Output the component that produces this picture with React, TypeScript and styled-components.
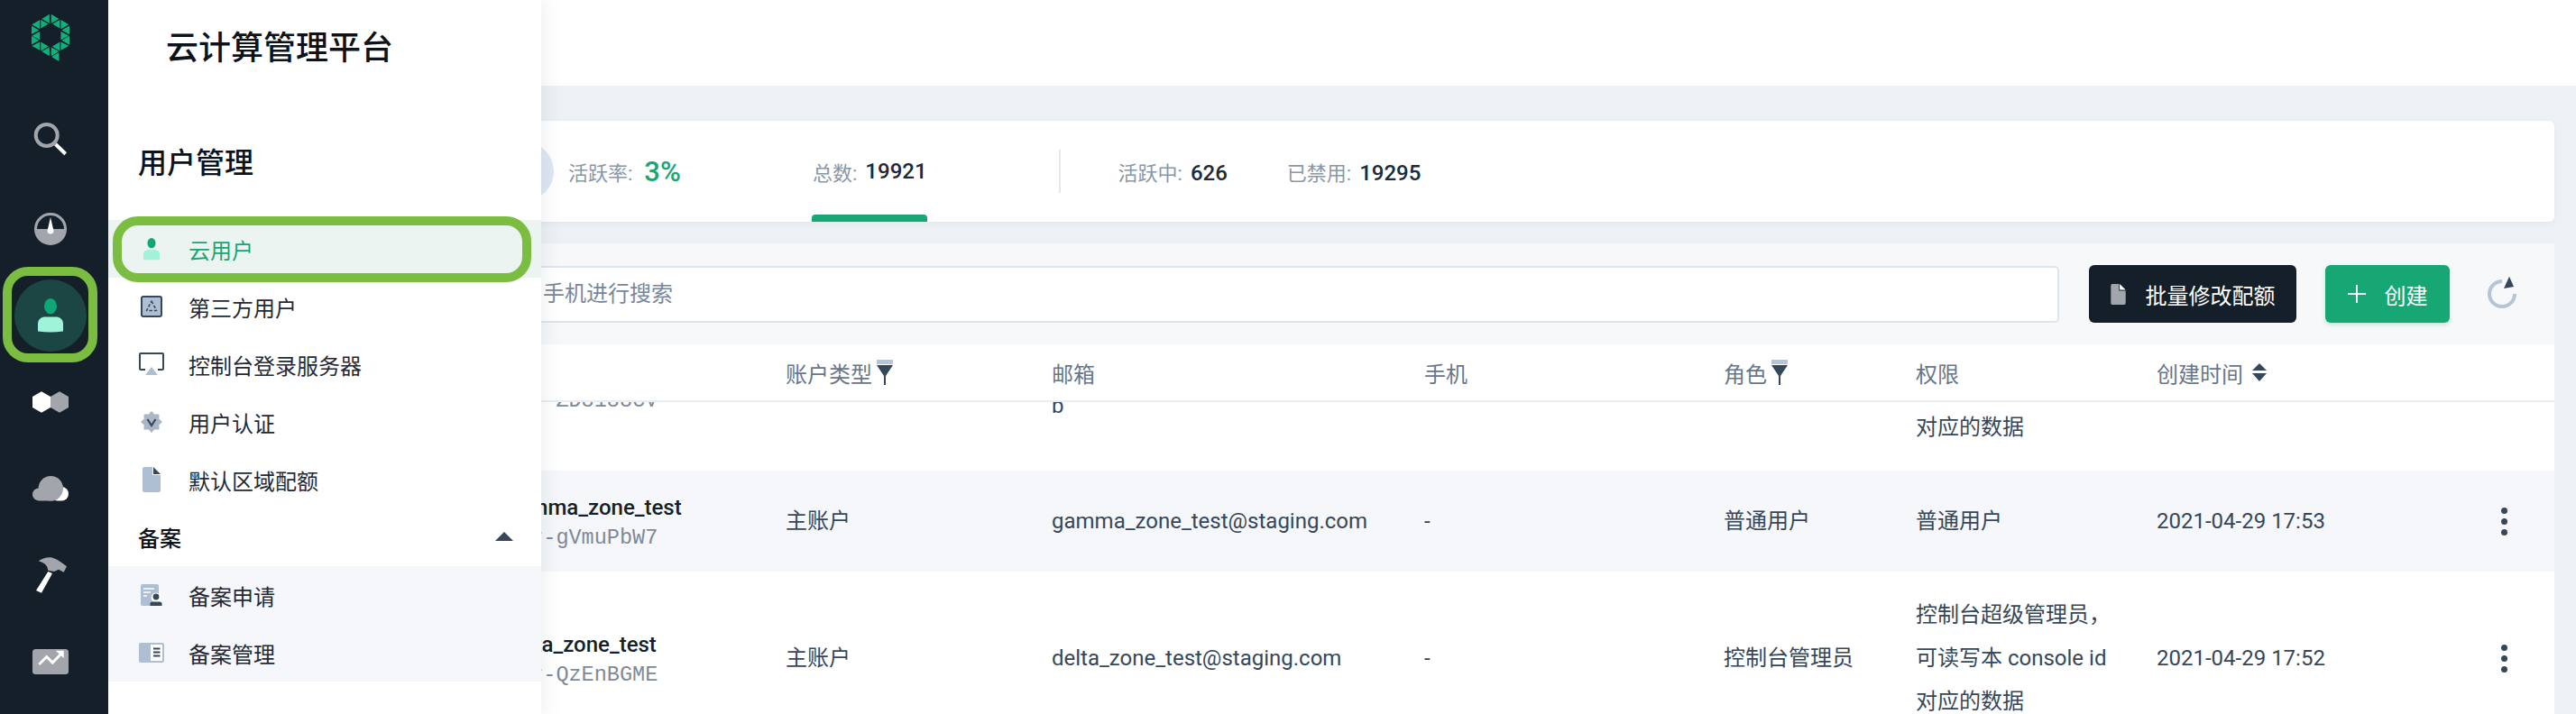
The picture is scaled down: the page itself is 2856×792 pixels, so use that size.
import React from "react";
import styled, { createGlobalStyle } from "styled-components";

const GlobalStyle = createGlobalStyle`
  html, body {
    margin: 0;
    padding: 0;
    background: #edf1f5;
  }
  body {
    font-family: Roboto, "Noto Sans CJK SC", sans-serif;
    overflow: hidden;
  }
`;

const Page = styled.div`
  position: relative;
  display: flex;
  width: 2856px;
  height: 792px;
  overflow: hidden;
  background: #edf1f5;
`;

const Sidebar = styled.nav`
  flex: 0 0 120px;
  z-index: 3;
  padding-top: 15px;
  background: #151f29;
  box-sizing: border-box;
`;

const LogoWrap = styled.div`
  display: flex;
  justify-content: center;
  margin-bottom: 42px;
  padding-right: 8px;
`;

const NavRow = styled.div<{ $selected?: boolean }>`
  position: relative;
  display: flex;
  align-items: center;
  justify-content: center;
  width: 112px;
  height: 96px;
  ${(p) =>
    p.$selected &&
    `
    &::after {
      content: "";
      position: absolute;
      top: -6px;
      bottom: -4px;
      left: 3px;
      right: 4px;
      border: 10px solid #7abd41;
      border-radius: 28px;
    }
  `}
`;

const NavCircle = styled.div`
  display: flex;
  align-items: center;
  justify-content: center;
  width: 80px;
  height: 80px;
  border-radius: 50%;
  background: #1c4644;
`;

const Panel = styled.aside`
  position: absolute;
  top: 0;
  bottom: 0;
  left: 120px;
  z-index: 2;
  width: 480px;
  background: #fff;
  box-shadow: 0 0 24px rgba(30, 50, 70, 0.1);
`;

const PanelTitle = styled.div`
  height: 106px;
  padding: 2px 0 0 64px;
  font-size: 36px;
  font-weight: 500;
  line-height: 104px;
  color: #0d1319;
  box-sizing: border-box;
`;

const SectionTitle = styled.div`
  height: 138px;
  padding: 34px 0 0 33px;
  font-size: 32px;
  font-weight: 500;
  line-height: 82px;
  color: #0d1319;
  box-sizing: border-box;
`;

const MenuRow = styled.div<{ $active?: boolean }>`
  position: relative;
  display: flex;
  align-items: center;
  height: 64px;
  padding-left: 33px;
  font-size: 24px;
  color: ${(p) => (p.$active ? "#16a774" : "#1f2a36")};
  background: ${(p) => (p.$active ? "#ebf4f1" : "transparent")};
  ${(p) =>
    p.$active &&
    `
    &::after {
      content: "";
      position: absolute;
      top: -4px;
      bottom: -5px;
      left: 5px;
      right: 11px;
      border: 10px solid #7abd41;
      border-radius: 28px;
    }
  `}
`;

const MenuIcon = styled.span`
  display: flex;
  align-items: center;
  justify-content: center;
  flex: 0 0 30px;
  margin-right: 26px;
`;

const GroupHeader = styled.div`
  display: flex;
  align-items: center;
  justify-content: space-between;
  height: 56px;
  padding: 0 31px 0 33px;
  margin-top: 3px;
  font-size: 24px;
  font-weight: 500;
  color: #0d1319;
`;

const Caret = styled.span`
  width: 0;
  height: 0;
  border-left: 10px solid transparent;
  border-right: 10px solid transparent;
  border-bottom: 10px solid #36475a;
`;

const SubMenu = styled.div`
  margin-top: 5px;
  background: #f5f7fb;
`;

const Main = styled.main`
  flex: 1;
  min-width: 0;
`;

const TopBar = styled.header`
  height: 95px;
  background: #fff;
`;

const Content = styled.div`
  padding: 39px 24px 0;
`;

const StatsCard = styled.section`
  display: flex;
  align-items: center;
  height: 112px;
  padding-left: 404px;
  margin-bottom: 24px;
  border-radius: 6px;
  background: #fff;
  box-shadow: 0 2px 6px rgba(30, 50, 70, 0.05);
  font-size: 22px;
  color: #8a97a5;
`;

const RateCircle = styled.div`
  flex: 0 0 66px;
  height: 66px;
  margin-right: 16px;
  border-radius: 50%;
  background: #dfe8f3;
`;

const RateBlock = styled.div`
  display: flex;
  align-items: center;
  flex: 0 0 271px;
`;

const RateValue = styled.span`
  margin-left: 13px;
  font-size: 31px;
  font-weight: 500;
  color: #16a774;
`;

const Stat = styled.div<{ $gap?: number }>`
  margin-right: ${(p) => p.$gap ?? 0}px;
  white-space: nowrap;
`;

const StatNumber = styled.b`
  margin-left: 9px;
  font-size: 24px;
  font-weight: 500;
  color: #1e2a36;
`;

const ActiveTab = styled.div`
  position: relative;
  display: flex;
  align-items: center;
  align-self: stretch;
  flex: 0 0 126px;
  margin-right: 146px;
  white-space: nowrap;
  &::after {
    content: "";
    position: absolute;
    left: -1px;
    right: 0;
    bottom: 0;
    height: 8px;
    border-radius: 4px 4px 0 0;
    background: #16a774;
  }
`;

const Divider = styled.div`
  flex: 0 0 2px;
  height: 48px;
  margin-right: 64px;
  background: #e2e8ee;
`;

const Toolbar = styled.div`
  display: flex;
  align-items: center;
  height: 112px;
  padding-left: 196px;
  background: #f6f8fa;
`;

const SearchBox = styled.div`
  flex: 0 0 1943px;
  height: 63px;
  padding-left: 20px;
  margin-right: 33px;
  border: 2px solid #dde5ee;
  border-radius: 5px;
  background: #fff;
  box-sizing: border-box;
  font-size: 24px;
  line-height: 59px;
  color: #78879a;
  white-space: nowrap;
`;

const ActionButton = styled.button<{ $primary?: boolean }>`
  display: flex;
  align-items: center;
  justify-content: center;
  flex: 0 0 ${(p) => (p.$primary ? "138px" : "230px")};
  height: 64px;
  padding: 0;
  margin-right: 32px;
  border: 0;
  border-radius: 6px;
  font-family: inherit;
  font-size: 24px;
  color: #fff;
  background: ${(p) => (p.$primary ? "#16a774" : "#151f29")};
  box-shadow: ${(p) => (p.$primary ? "0 2px 4px rgba(22, 167, 116, 0.25)" : "none")};
  gap: ${(p) => (p.$primary ? "21px" : "22px")};
`;

const RefreshWrap = styled.span`
  display: flex;
  margin: -4px 0 0 9px;
`;

const Table = styled.section`
  background: #fff;
`;

const columns = "311px 295px 413px 332px 213px 267px 267px 1fr";

const HeaderRow = styled.div`
  display: grid;
  grid-template-columns: ${columns};
  align-items: center;
  height: 64px;
  padding-left: 416px;
  border-bottom: 2px solid #e8edf2;
  box-sizing: border-box;
  font-size: 24px;
  color: #67768a;
`;

const HeadCell = styled.div<{ $gap?: number }>`
  display: flex;
  align-items: center;
  gap: ${(p) => p.$gap ?? 4}px;
  height: 62px;
`;

const Viewport = styled.div`
  height: 346px;
  overflow: hidden;
`;

const Rows = styled.div`
  margin-top: -116px;
`;

const Row = styled.div<{ $tall?: boolean; $shade?: boolean }>`
  display: grid;
  grid-template-columns: ${columns};
  align-items: center;
  height: ${(p) => (p.$tall ? "192px" : "112px")};
  padding-left: 416px;
  background: ${(p) => (p.$shade ? "#f5f7fa" : "#fff")};
  font-size: 24px;
  line-height: 48px;
  color: #36475a;
`;

const NameCell = styled.div`
  margin-top: 4px;
`;

const Name = styled.div`
  font-weight: 500;
  line-height: 34px;
  color: #151f29;
  white-space: nowrap;
`;

const SubId = styled.div`
  font-family: "Liberation Mono", monospace;
  font-size: 23.5px;
  line-height: 34px;
  color: #7c8a99;
  white-space: nowrap;
`;

const Line = styled.div`
  white-space: nowrap;
`;

const Kebab = styled.div`
  display: flex;
  flex-direction: column;
  align-items: center;
  gap: 5px;
  width: 8px;
  margin-left: 114px;
`;

const Dot = styled.span`
  width: 7px;
  height: 7px;
  border-radius: 50%;
  background: #36475a;
`;

const triangles = [
  "3,2 29,18 3,32",
  "32,21 32,50 7,35",
  "35,21 62,37 35,52",
  "64,41 64,70 38,56",
  "35,60 62,75 35,88",
  "64,75 64,105 38,90",
  "35,95 62,109 35,123",
  "32,95 32,125 6,110",
  "3,113 29,127 3,143",
];

const Logo = () => (
  <svg width="42" height="53" viewBox="105 45 127 160" aria-hidden="true">
    <g fill="#10b07c">
      {triangles.map((t) => {
        const pts = t.split(" ").map((p) => p.split(",").map(Number));
        return (
          <React.Fragment key={t}>
            <polygon points={pts.map(([x, y]) => `${168 + x},${45 + y}`).join(" ")} />
            <polygon points={pts.map(([x, y]) => `${168 - x},${45 + y}`).join(" ")} />
          </React.Fragment>
        );
      })}
      <polygon points="172,190 197,176 197,205" />
    </g>
  </svg>
);

const GREY = "#a2a5ab";
const LIGHT = "#aebfd3";
const DARK = "#36475a";

const NavSearch = () => (
  <svg width="48" height="48" viewBox="0 0 48 48" aria-hidden="true">
    <circle cx="19.7" cy="16" r="12" fill="none" stroke={GREY} strokeWidth="4" />
    <path d="M29.6 26 L40.7 36.7" stroke="#fff" strokeWidth="4" />
  </svg>
);

const NavGauge = () => (
  <svg width="48" height="48" viewBox="0 0 48 48" aria-hidden="true">
    <path d="M6 24 a18 18 0 0 0 36 0 z" fill={GREY} />
    <path d="M7.5 24 a16.5 16.5 0 0 1 33 0" fill="none" stroke={GREY} strokeWidth="3" />
    <path d="M24 11 L27.5 26 a3.5 3.5 0 1 1 -7 0 z" fill="#fff" />
  </svg>
);

const UserGlyph = ({ width, height, viewBox }: { width: number; height: number; viewBox: string }) => (
  <svg width={width} height={height} viewBox={viewBox} aria-hidden="true">
    <ellipse cx="24" cy="13.7" rx="7" ry="8.7" fill="#0fa678" />
    <path
      d="M10 41.5 V33 C10 28 14 25.5 18 25.5 H30 C34 25.5 38 28 38 33 V41.5 Q24 43.5 10 41.5 Z"
      fill="#9ef3d8"
    />
  </svg>
);

const NavHexes = () => (
  <svg width="48" height="48" viewBox="0 0 48 48" aria-hidden="true">
    <polygon points="34,12.3 44,18 44,30 34,35.7 24,30 24,18" fill={GREY} />
    <polygon points="14,12.3 24,18 24,30 14,35.7 4,30 4,18" fill="#fff" />
  </svg>
);

const NavCloud = () => (
  <svg width="48" height="48" viewBox="0 0 48 48" aria-hidden="true">
    <rect x="24" y="22" width="20" height="15.4" rx="7.7" fill="#fff" />
    <rect x="4" y="23.4" width="30" height="14" rx="7" fill={GREY} />
    <circle cx="24.3" cy="23.8" r="13.7" fill={GREY} />
  </svg>
);

const NavHammer = () => (
  <svg width="48" height="48" viewBox="0 0 48 48" aria-hidden="true">
    <path d="M21.3 20 L26 22 L14 43.7 L8 41 Z" fill="#fff" />
    <path
      d="M10.7 8.3 Q18 3.5 24.7 4.3 Q30 5 42 14.3 L38.7 20.7 L33 17.7 L28 20 L21.3 18.7 Q21 11 10.7 8.3 Z"
      fill={GREY}
    />
  </svg>
);

const NavChart = () => (
  <svg width="48" height="48" viewBox="0 0 48 48" aria-hidden="true">
    <rect x="4" y="10" width="40" height="28" rx="3.5" fill={GREY} />
    <path d="M11.3 27 L19.7 18.5 L26.3 25 L36 15" fill="none" stroke="#fff" strokeWidth="3" />
    <polygon points="29.7,11.7 38.7,11.7 38.7,20" fill="#fff" />
  </svg>
);

const IconThirdParty = () => (
  <svg width="24" height="24" viewBox="0 0 24 24" aria-hidden="true">
    <rect x="1" y="1" width="22" height="22" rx="2" fill={LIGHT} stroke={DARK} strokeWidth="2" />
    <path
      d="M12 6 L17.5 16.5 H6.5 Z"
      fill="none"
      stroke={DARK}
      strokeWidth="1.6"
      strokeDasharray="3.5 2"
      strokeLinejoin="round"
    />
  </svg>
);

const IconMonitor = () => (
  <svg width="28" height="28" viewBox="0 0 28 28" aria-hidden="true">
    <path
      d="M7 20 H2 a1 1 0 0 1 -1 -1 V3 a1 1 0 0 1 1 -1 H26 a1 1 0 0 1 1 1 V19 a1 1 0 0 1 -1 1 H21"
      fill="none"
      stroke={DARK}
      strokeWidth="2"
    />
    <polygon points="14,17 21,26 7,26" fill={LIGHT} />
  </svg>
);

const IconBadge = () => (
  <svg width="24" height="24" viewBox="0 0 24 24" aria-hidden="true">
    <polygon
      points="12,0 15.2,3.6 20.5,3.5 20.4,8.8 24,12 20.4,15.2 20.5,20.5 15.2,20.4 12,24 8.8,20.4 3.5,20.5 3.6,15.2 0,12 3.6,8.8 3.5,3.5 8.8,3.6"
      fill="#aab6c4"
    />
    <path d="M7.5 9 L12 16 L16.5 9" fill="none" stroke={DARK} strokeWidth="2.2" />
  </svg>
);

const IconFile = ({
  fill = LIGHT,
  fold = DARK,
  width = 20,
  height = 28,
}: {
  fill?: string;
  fold?: string;
  width?: number;
  height?: number;
}) => (
  <svg width={width} height={height} viewBox="0 0 20 28" aria-hidden="true">
    <path d="M2 0 H11 V9 H20 V26 a2 2 0 0 1 -2 2 H2 a2 2 0 0 1 -2 -2 V2 a2 2 0 0 1 2 -2 Z" fill={fill} />
    <polygon points="12,0 20,8 12,8" fill={fold} />
  </svg>
);

const IconRecordApply = () => (
  <svg width="24" height="24" viewBox="0 0 24 24" aria-hidden="true">
    <rect x="0" y="0" width="20" height="24" rx="2" fill={LIGHT} />
    <path d="M3 5 H15 M3 9 H11 M3 13 H7" stroke="#fff" strokeWidth="1.6" />
    <circle cx="17" cy="15" r="5.5" fill="#fff" />
    <circle cx="17" cy="14" r="3.4" fill={DARK} />
    <path d="M10.5 24 V21.5 Q10.5 19.5 13 19.5 H21 Q23.5 19.5 23.5 21.5 V24 Z" fill={DARK} />
  </svg>
);

const IconRecordManage = () => (
  <svg width="28" height="22" viewBox="0 0 28 22" aria-hidden="true">
    <rect width="28" height="22" rx="2" fill={LIGHT} />
    <rect x="13" y="2" width="13" height="18" fill="#fff" />
    <path d="M16 6.5 H23.5 M16 10.5 H23.5 M16 14.5 H23.5" stroke={DARK} strokeWidth="2" />
  </svg>
);

const IconPlus = () => (
  <svg width="20" height="20" viewBox="0 0 20 20" aria-hidden="true">
    <path d="M10 0 V20 M0 10 H20" stroke="#fff" strokeWidth="2" />
  </svg>
);

const IconRefresh = () => (
  <svg width="34" height="38" viewBox="0 0 34 38" aria-hidden="true">
    <path d="M17 7 A14 14 0 1 0 31 21" fill="none" stroke="#b5c4d6" strokeWidth="4" />
    <polygon points="25,1.7 30,13 19,15" fill={DARK} />
  </svg>
);

const IconFilter = () => (
  <svg width="20" height="28" viewBox="0 0 20 28" aria-hidden="true">
    <rect x="1" y="0" width="18" height="5" fill="#b5c4d6" />
    <polygon points="1,6 19,6 11,18 9,18" fill={DARK} />
    <rect x="9" y="17" width="2" height="11" fill={DARK} />
  </svg>
);

const IconSort = () => (
  <svg width="18" height="20" viewBox="0 0 18 20" aria-hidden="true">
    <polygon points="9,0 17,8 1,8" fill={DARK} />
    <polygon points="1,11 17,11 9,20" fill={DARK} />
  </svg>
);

const FilterHead = ({ label }: { label: string }) => (
  <HeadCell>
    {label}
    <IconFilter />
  </HeadCell>
);

const superAdmin = ["控制台超级管理员，", "可读写本 console id", "对应的数据"];

const More = () => (
  <Kebab>
    <Dot />
    <Dot />
    <Dot />
  </Kebab>
);

export default function App() {
  return (
    <Page>
      <GlobalStyle />
      <Sidebar>
        <LogoWrap>
          <Logo />
        </LogoWrap>
        <NavRow>
          <NavSearch />
        </NavRow>
        <NavRow>
          <NavGauge />
        </NavRow>
        <NavRow $selected>
          <NavCircle>
            <UserGlyph width={48} height={48} viewBox="0 0 48 48" />
          </NavCircle>
        </NavRow>
        <NavRow>
          <NavHexes />
        </NavRow>
        <NavRow>
          <NavCloud />
        </NavRow>
        <NavRow>
          <NavHammer />
        </NavRow>
        <NavRow>
          <NavChart />
        </NavRow>
      </Sidebar>

      <Panel>
        <PanelTitle>云计算管理平台</PanelTitle>
        <SectionTitle>用户管理</SectionTitle>
        <MenuRow $active>
          <MenuIcon>
            <UserGlyph width={20} height={25} viewBox="10 5 28 38.5" />
          </MenuIcon>
          云用户
        </MenuRow>
        <MenuRow>
          <MenuIcon>
            <IconThirdParty />
          </MenuIcon>
          第三方用户
        </MenuRow>
        <MenuRow>
          <MenuIcon>
            <IconMonitor />
          </MenuIcon>
          控制台登录服务器
        </MenuRow>
        <MenuRow>
          <MenuIcon>
            <IconBadge />
          </MenuIcon>
          用户认证
        </MenuRow>
        <MenuRow>
          <MenuIcon>
            <IconFile />
          </MenuIcon>
          默认区域配额
        </MenuRow>
        <GroupHeader>
          备案
          <Caret />
        </GroupHeader>
        <SubMenu>
          <MenuRow>
            <MenuIcon>
              <IconRecordApply />
            </MenuIcon>
            备案申请
          </MenuRow>
          <MenuRow>
            <MenuIcon>
              <IconRecordManage />
            </MenuIcon>
            备案管理
          </MenuRow>
        </SubMenu>
      </Panel>

      <Main>
        <TopBar />
        <Content>
          <StatsCard>
            <RateCircle />
            <RateBlock>
              活跃率:
              <RateValue>3%</RateValue>
            </RateBlock>
            <ActiveTab>
              总数:<StatNumber>19921</StatNumber>
            </ActiveTab>
            <Divider />
            <Stat $gap={66}>
              活跃中:<StatNumber>626</StatNumber>
            </Stat>
            <Stat>
              已禁用:<StatNumber>19295</StatNumber>
            </Stat>
          </StatsCard>

          <Toolbar>
            <SearchBox>可通过用户名、邮箱、手机进行搜索</SearchBox>
            <ActionButton>
              <IconFile fill={GREY} fold="#fff" width={17} height={23} />
              批量修改配额
            </ActionButton>
            <ActionButton $primary>
              <IconPlus />
              创建
            </ActionButton>
            <RefreshWrap>
              <IconRefresh />
            </RefreshWrap>
          </Toolbar>

          <Table>
            <HeaderRow>
              <HeadCell>ID</HeadCell>
              <FilterHead label="账户类型" />
              <HeadCell>邮箱</HeadCell>
              <HeadCell>手机</HeadCell>
              <FilterHead label="角色" />
              <HeadCell>权限</HeadCell>
              <HeadCell $gap={9}>
                创建时间
                <IconSort />
              </HeadCell>
            </HeaderRow>
            <Viewport>
              <Rows>
                <Row $tall>
                  <NameCell>
                    <Name>beta_zone_test</Name>
                    <SubId>usr-ZD8188CV</SubId>
                  </NameCell>
                  <div>主账户</div>
                  <div>
                    <Line>beta_zone_test@staging.com</Line>
                    <Line>b</Line>
                  </div>
                  <div>-</div>
                  <div>控制台管理员</div>
                  <div>
                    {superAdmin.map((l) => (
                      <Line key={l}>{l}</Line>
                    ))}
                  </div>
                  <div>2021-04-29 17:54</div>
                  <More />
                </Row>
                <Row $shade>
                  <NameCell>
                    <Name>gamma_zone_test</Name>
                    <SubId>usr-gVmuPbW7</SubId>
                  </NameCell>
                  <div>主账户</div>
                  <div>gamma_zone_test@staging.com</div>
                  <div>-</div>
                  <div>普通用户</div>
                  <div>普通用户</div>
                  <div>2021-04-29 17:53</div>
                  <More />
                </Row>
                <Row $tall>
                  <NameCell>
                    <Name>delta_zone_test</Name>
                    <SubId>usr-QzEnBGME</SubId>
                  </NameCell>
                  <div>主账户</div>
                  <div>delta_zone_test@staging.com</div>
                  <div>-</div>
                  <div>控制台管理员</div>
                  <div>
                    {superAdmin.map((l) => (
                      <Line key={l}>{l}</Line>
                    ))}
                  </div>
                  <div>2021-04-29 17:52</div>
                  <More />
                </Row>
              </Rows>
            </Viewport>
          </Table>
        </Content>
      </Main>
    </Page>
  );
}
